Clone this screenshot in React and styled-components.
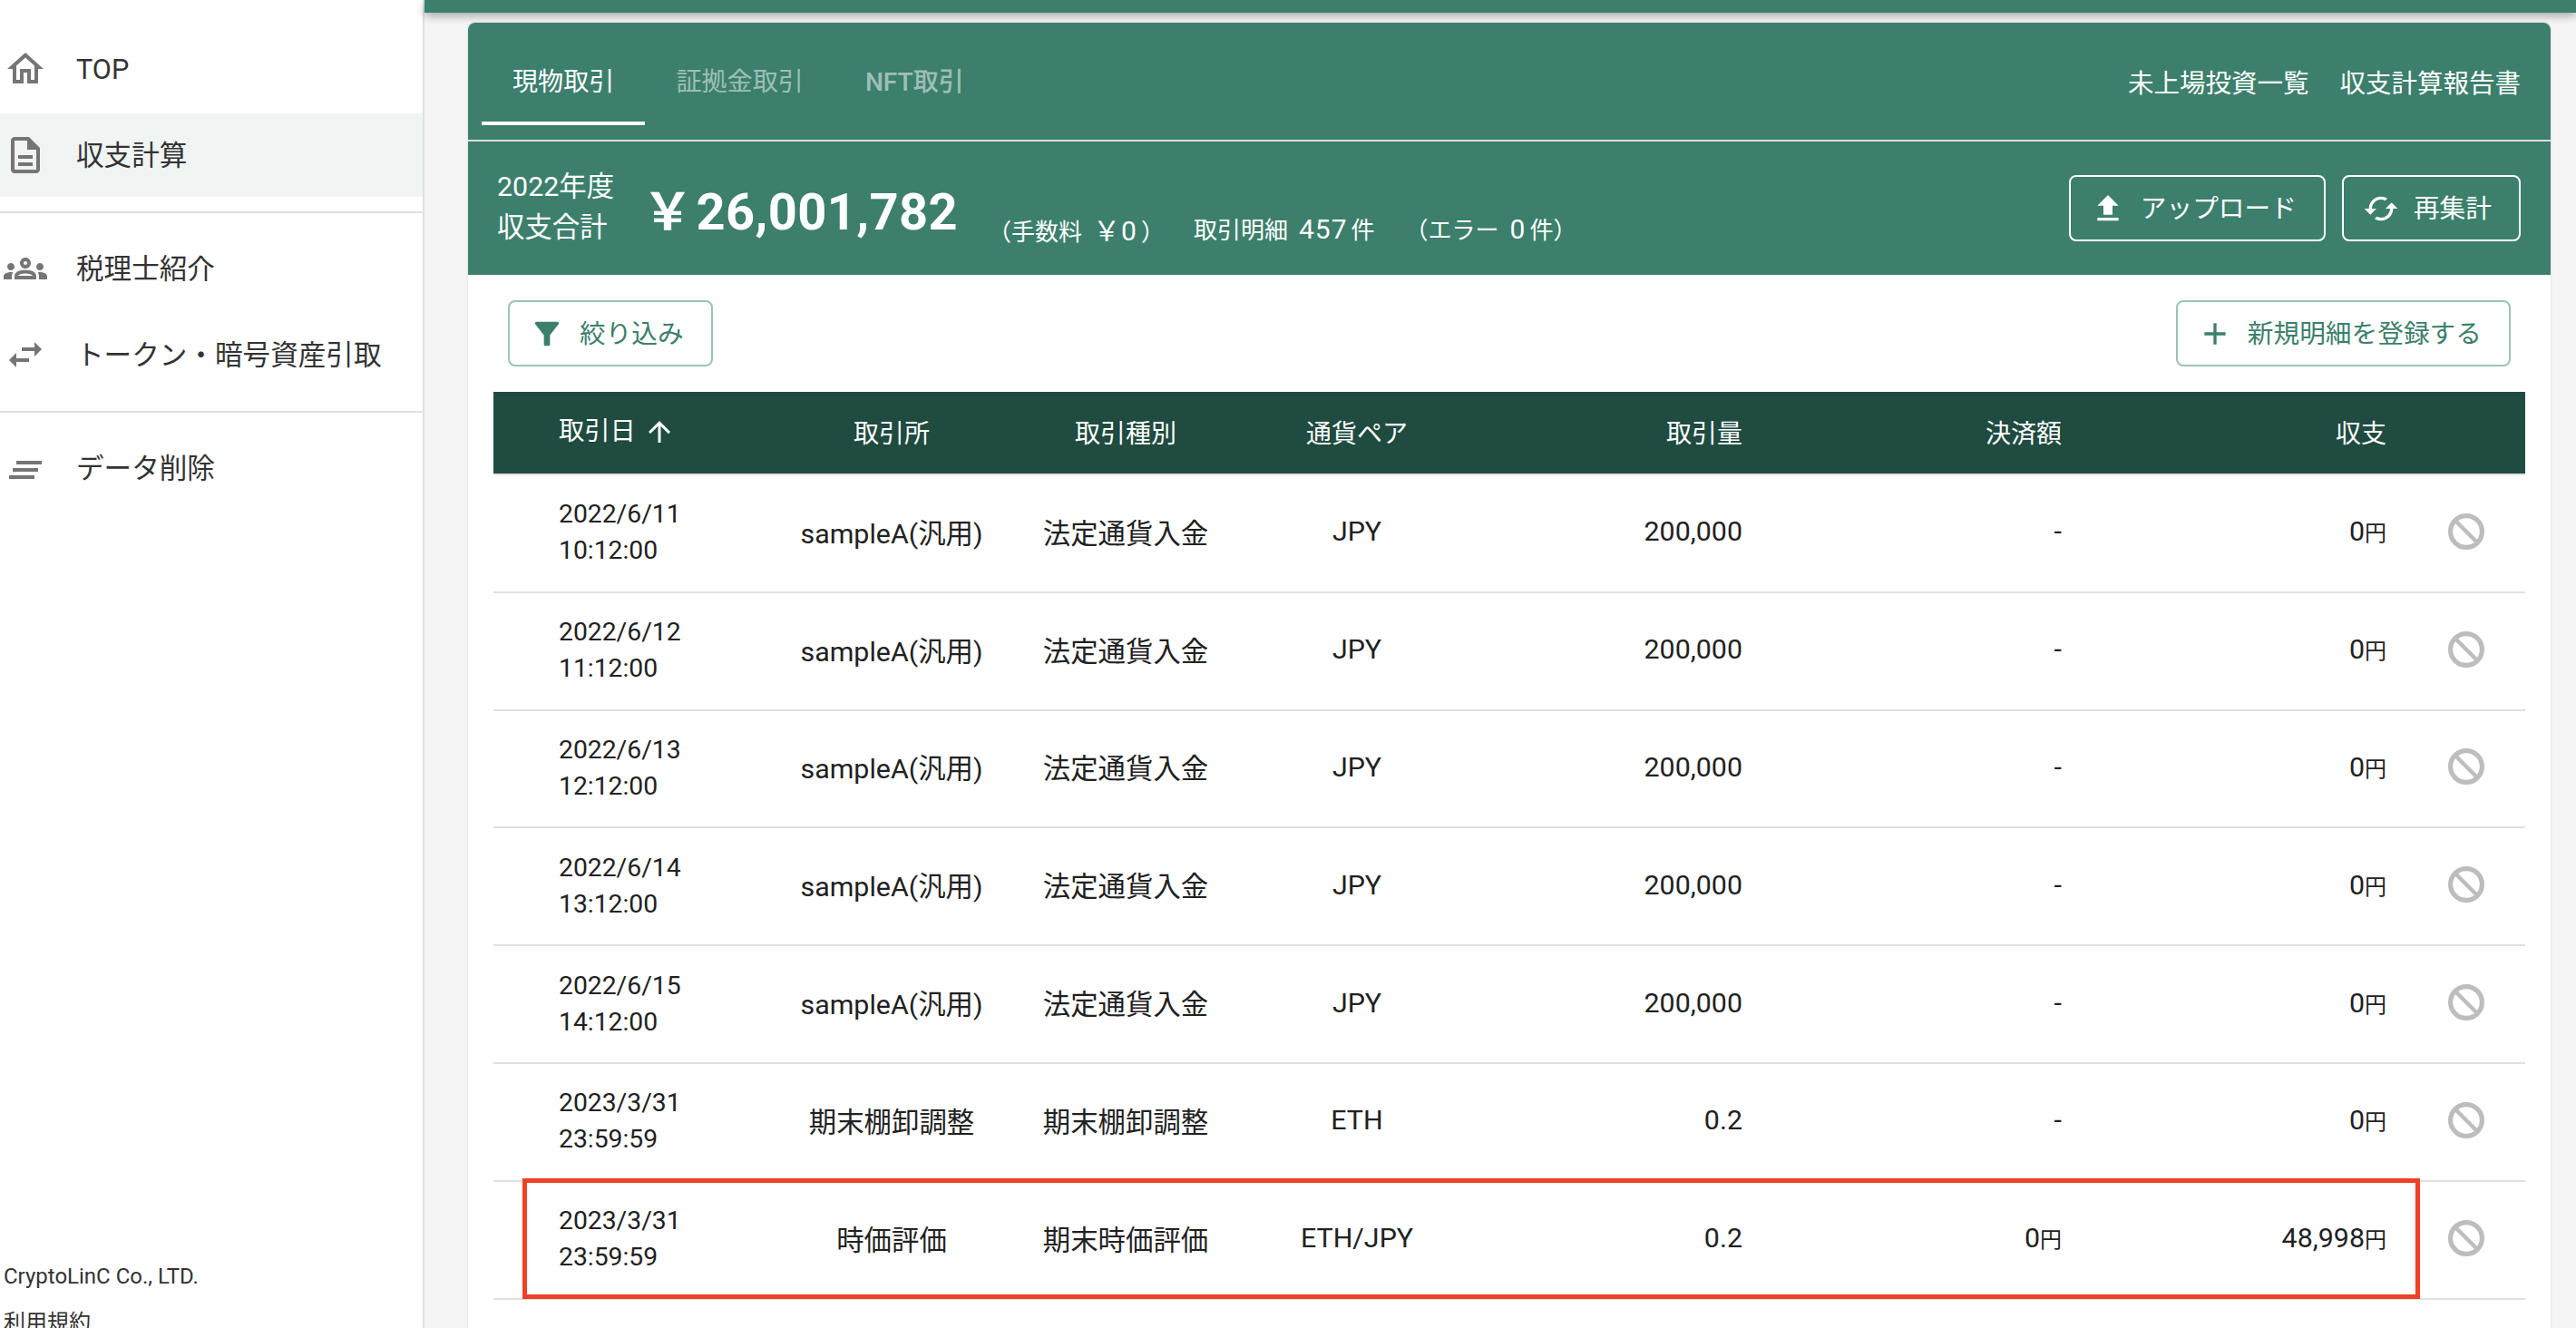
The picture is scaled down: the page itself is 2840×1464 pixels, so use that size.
import styled, { createGlobalStyle } from "styled-components";

const green = "#3c7f6c";
const darkGreen = "#1f4b40";

const Global = createGlobalStyle`
  html, body {
    margin: 0;
    height: 100%;
    overflow: hidden;
    background: #f5f5f5;
  }
  * { box-sizing: border-box; }
  body {
    font-family: Roboto, "Noto Sans CJK JP", sans-serif;
    color: #212121;
  }
`;

const Shell = styled.div`
  display: flex;
  height: 1484px;
`;

const Sidebar = styled.aside`
  flex: 0 0 468px;
  display: flex;
  flex-direction: column;
  padding-top: 30px;
  background: #fff;
  border-right: 2px solid #e0e0e0;
`;

const NavGroup = styled.div`
  display: flex;
  flex-direction: column;
  gap: 3px;
`;

const NavItem = styled.div`
  display: flex;
  align-items: center;
  gap: 32px;
  height: 92px;
  padding-left: 4px;
  font-size: 30.6px;
  color: #333;
  background: ${(p) => (p.$active ? "#f0f4f3" : "transparent")};
  svg { flex: none; fill: #757575; }
`;

const NavLabel = styled.span`
  margin-bottom: ${(p) => (p.$latin ? 0 : 5)}px;
`;

const NavDivider = styled.div`
  height: 2px;
  margin: 16px 0 15px;
  background: #e0e0e0;
`;

const SideFooter = styled.div`
  margin-top: auto;
  padding-left: 4px;
  font-size: 24px;
  line-height: 51px;
  color: #333;
`;

const Main = styled.main`
  flex: 1;
  display: flex;
  flex-direction: column;
  min-width: 0;
`;

const TopBar = styled.div`
  flex: none;
  height: 14px;
  background: ${green};
  box-shadow: 0 4px 10px rgba(0, 0, 0, 0.3);
`;

const Card = styled.section`
  flex: 1;
  margin: 11px 28px 0 48px;
  background: #fff;
  border-radius: 8px 8px 0 0;
  box-shadow: 0 0 3px rgba(0, 0, 0, 0.12);
`;

const TabBar = styled.div`
  display: flex;
  align-items: stretch;
  justify-content: space-between;
  height: 131px;
  padding: 15px 33px 0 15px;
  background: ${green};
  border-radius: 8px 8px 0 0;
  border-bottom: 2px solid #dcdcdc;
`;

const Tabs = styled.div`
  display: flex;
  height: 98px;
`;

const Tab = styled.div`
  display: flex;
  align-items: center;
  padding: 0 34px;
  font-size: 28.1px;
  color: ${(p) => (p.$active ? "#fff" : "rgba(255, 255, 255, 0.5)")};
  font-weight: ${(p) => (p.$bold ? 500 : 400)};
  border-bottom: 4px solid ${(p) => (p.$active ? "#fff" : "transparent")};
`;

const TabLinks = styled.div`
  display: flex;
  align-items: center;
  gap: 34px;
  height: 98px;
  font-size: 28.5px;
  color: #fff;
`;

const Summary = styled.div`
  display: flex;
  align-items: center;
  height: 147px;
  padding: 0 33px 0 32px;
  background: ${green};
  color: #fff;
`;

const YearLabel = styled.div`
  width: 170px;
  margin-bottom: 3px;
  font-size: 30.4px;
  line-height: 45px;
`;

const Total = styled.div`
  width: 371px;
  margin-bottom: 3px;
  font-size: 56px;
  font-weight: 700;
  letter-spacing: 0.4px;
  white-space: nowrap;
`;

const Currency = styled.span`
  display: inline-block;
  margin: 0 3px 0 -10px;
`;

const Stats = styled.div`
  display: flex;
  align-items: center;
  margin-top: 44px;
  font-size: 26px;
  white-space: nowrap;
`;

const Stat = styled.span`
  margin-right: ${(p) => p.$gap}px;
`;

const StatNumber = styled.span`
  margin: 0 4px 0 12px;
  font-size: 30px;
  letter-spacing: 1px;
`;

const SummaryActions = styled.div`
  display: flex;
  gap: 18px;
  margin-left: auto;
`;

const OutlineButton = styled.div`
  display: flex;
  align-items: center;
  gap: 16px;
  height: 73px;
  padding: 0 30px 0 21px;
  font-size: 28.7px;
  border-radius: 8px;
  border: 2px solid ${(p) => (p.$light ? "#fff" : "#9dc2b7")};
  color: ${(p) => (p.$light ? "#fff" : green)};
  background: ${(p) => (p.$light ? "transparent" : "#fff")};
  svg { flex: none; fill: currentColor; }
`;

const ButtonLabel = styled.span`
  margin-bottom: 5px;
`;

const Toolbar = styled.div`
  display: flex;
  justify-content: space-between;
  padding: 28px 44px 28px 44px;
`;

const Table = styled.div`
  margin: 0 28px;
`;

const columns = "296px 286px 230px 280px 285px 352px 358px 153px";

const HeadRow = styled.div`
  display: grid;
  grid-template-columns: ${columns};
  align-items: center;
  height: 92px;
  padding-bottom: 2px;
  font-size: 28px;
  color: #fff;
  background: ${darkGreen};
  border-bottom: 2px solid #e0e0e0;
`;

const Row = styled.div`
  position: relative;
  display: grid;
  grid-template-columns: ${columns};
  align-items: center;
  height: 129.8px;
  padding-bottom: 4px;
  font-size: 30.4px;
  border-bottom: 2px solid #e0e0e0;
`;

const Cell = styled.div`
  text-align: ${(p) => p.$align || "center"};
  white-space: nowrap;
`;

const DateCell = styled.div`
  display: flex;
  align-items: center;
  padding-left: 72px;
  padding-top: ${(p) => (p.$body ? 3 : 0)}px;
  font-size: 28.3px;
  line-height: 40px;
  svg { fill: #fff; margin-left: 8px; }
`;

const Yen = styled.span`
  font-size: 24px;
`;

const ActionCell = styled.div`
  display: flex;
  padding-left: 64px;
  svg { fill: none; stroke: #bdbdbd; }
`;

const Highlight = styled.div`
  position: absolute;
  top: -4px;
  bottom: -1px;
  left: 32px;
  right: 116px;
  border: 5px solid #ee4125;
  pointer-events: none;
`;

const Icon = ({ d, size = 40 }) => (
  <svg width={size} height={size} viewBox="0 0 24 24" aria-hidden="true">
    <path d={d} />
  </svg>
);

const BanIcon = () => (
  <svg width={48} height={48} viewBox="0 0 24 24" aria-hidden="true">
    <circle cx="12" cy="12" r="8.7" strokeWidth="2.6" />
    <line x1="6" y1="6" x2="18" y2="18" strokeWidth="2.2" />
  </svg>
);

const paths = {
  home: "m12 5.69 5 4.5V18h-2v-6H9v6H7v-7.81l5-4.5M12 3 2 12h3v8h6v-6h2v6h6v-8h3L12 3z",
  doc: "M8 16h8v2H8zm0-4h8v2H8zm6-10H6c-1.1 0-2 .9-2 2v16c0 1.1.89 2 1.99 2H18c1.1 0 2-.9 2-2V8l-6-6zm4 18H6V4h7v5h5v11z",
  groups:
    "M4 13c1.1 0 2-.9 2-2s-.9-2-2-2-2 .9-2 2 .9 2 2 2zm1.13 1.1c-.37-.06-.74-.1-1.13-.1-.99 0-1.93.21-2.78.58C.48 14.9 0 15.62 0 16.43V18h4.5v-1.61c0-.83.23-1.61.63-2.29zM20 13c1.1 0 2-.9 2-2s-.9-2-2-2-2 .9-2 2 .9 2 2 2zm4 3.43c0-.81-.48-1.53-1.22-1.85-.85-.37-1.79-.58-2.78-.58-.39 0-.76.04-1.13.1.4.68.63 1.46.63 2.29V18H24v-1.57zm-7.76-2.78c-1.17-.52-2.61-.9-4.24-.9-1.63 0-3.07.39-4.24.9C6.68 14.13 6 15.21 6 16.39V18h12v-1.61c0-1.18-.68-2.26-1.76-2.74zM8.07 16c.09-.23.13-.39.91-.69.97-.38 1.99-.56 3.02-.56s2.05.18 3.02.56c.77.3.81.46.91.69H8.07zM12 8c.55 0 1 .45 1 1s-.45 1-1 1-1-.45-1-1 .45-1 1-1m0-2c-1.66 0-3 1.34-3 3s1.34 3 3 3 3-1.34 3-3-1.34-3-3-3z",
  swap: "M6.99 11 3 15l3.99 4v-3H14v-2H6.99v-3zM21 9l-4-4v3h-7v2h7v3l4-4z",
  wipe: "M7 8h14v2H7zM5 12h14v2H5zM3 16h14v2H3z",
  upload: "M9 16h6v-6h4l-7-7-7 7h4zm-4 2h14v2H5z",
  cached:
    "m19 8-4 4h3c0 3.31-2.69 6-6 6-1.01 0-1.97-.25-2.8-.7l-1.46 1.46C8.97 19.54 10.43 20 12 20c4.42 0 8-3.58 8-8h3l-4-4zM6 12c0-3.31 2.69-6 6-6 1.01 0 1.97.25 2.8.7l1.46-1.46C15.03 4.46 13.57 4 12 4c-4.42 0-8 3.58-8 8H1l4 4 4-4H6z",
  filter:
    "M4.25 5.61C6.27 8.2 10 13 10 13v6c0 .55.45 1 1 1h2c.55 0 1-.45 1-1v-6s3.72-4.8 5.74-7.39c.51-.66.04-1.61-.79-1.61H5.04c-.83 0-1.3.95-.79 1.61z",
  add: "M19 13h-6v6h-2v-6H5v-2h6V5h2v6h6v2z",
  arrowUp: "M4 12l1.41 1.41L11 7.83V20h2V7.83l5.58 5.59L20 12l-8-8-8 8z",
};

const deposit = { exchange: "sampleA(汎用)", kind: "法定通貨入金", pair: "JPY", amount: "200,000", settled: "-", income: "0" };

const rows = [
  { ...deposit, day: "2022/6/11", time: "10:12:00" },
  { ...deposit, day: "2022/6/12", time: "11:12:00" },
  { ...deposit, day: "2022/6/13", time: "12:12:00" },
  { ...deposit, day: "2022/6/14", time: "13:12:00" },
  { ...deposit, day: "2022/6/15", time: "14:12:00" },
  { day: "2023/3/31", time: "23:59:59", exchange: "期末棚卸調整", kind: "期末棚卸調整", pair: "ETH", amount: "0.2", settled: "-", income: "0" },
  { day: "2023/3/31", time: "23:59:59", exchange: "時価評価", kind: "期末時価評価", pair: "ETH/JPY", amount: "0.2", settled: "0", income: "48,998", marked: true },
];

function Money({ value }) {
  if (value === "-") return value;
  return (
    <>
      {value}
      <Yen>円</Yen>
    </>
  );
}

export default function App() {
  return (
    <Shell>
      <Global />
      <Sidebar>
        <NavGroup>
          <NavItem><Icon d={paths.home} size={48} /><NavLabel $latin>TOP</NavLabel></NavItem>
          <NavItem $active><Icon d={paths.doc} size={48} /><NavLabel>収支計算</NavLabel></NavItem>
        </NavGroup>
        <NavDivider />
        <NavGroup>
          <NavItem><Icon d={paths.groups} size={48} /><NavLabel>税理士紹介</NavLabel></NavItem>
          <NavItem><Icon d={paths.swap} size={48} /><NavLabel>トークン・暗号資産引取</NavLabel></NavItem>
        </NavGroup>
        <NavDivider />
        <NavGroup>
          <NavItem><Icon d={paths.wipe} size={48} /><NavLabel>データ削除</NavLabel></NavItem>
        </NavGroup>
        <SideFooter>
          <div>CryptoLinC Co., LTD.</div>
          <div>利用規約</div>
        </SideFooter>
      </Sidebar>

      <Main>
        <TopBar />
        <Card>
          <TabBar>
            <Tabs>
              <Tab $active>現物取引</Tab>
              <Tab>証拠金取引</Tab>
              <Tab $bold>NFT取引</Tab>
            </Tabs>
            <TabLinks>
              <span>未上場投資一覧</span>
              <span>収支計算報告書</span>
            </TabLinks>
          </TabBar>

          <Summary>
            <YearLabel>
              2022年度
              <br />
              収支合計
            </YearLabel>
            <Total><Currency>￥</Currency>26,001,782</Total>
            <Stats>
              <Stat $gap={32}>（手数料<StatNumber>￥0</StatNumber>）</Stat>
              <Stat $gap={33}>取引明細<StatNumber>457</StatNumber>件</Stat>
              <Stat $gap={0}>（エラー<StatNumber>0</StatNumber>件）</Stat>
            </Stats>
            <SummaryActions>
              <OutlineButton $light><Icon d={paths.upload} /><ButtonLabel>アップロード</ButtonLabel></OutlineButton>
              <OutlineButton $light><Icon d={paths.cached} /><ButtonLabel>再集計</ButtonLabel></OutlineButton>
            </SummaryActions>
          </Summary>

          <Toolbar>
            <OutlineButton><Icon d={paths.filter} /><ButtonLabel>絞り込み</ButtonLabel></OutlineButton>
            <OutlineButton><Icon d={paths.add} /><ButtonLabel>新規明細を登録する</ButtonLabel></OutlineButton>
          </Toolbar>

          <Table>
            <HeadRow>
              <DateCell>取引日<Icon d={paths.arrowUp} size={36} /></DateCell>
              <Cell>取引所</Cell>
              <Cell>取引種別</Cell>
              <Cell>通貨ペア</Cell>
              <Cell $align="right">取引量</Cell>
              <Cell $align="right">決済額</Cell>
              <Cell $align="right">収支</Cell>
              <div />
            </HeadRow>
            {rows.map((row, i) => (
              <Row key={i}>
                <DateCell $body>
                  <div>
                    {row.day}
                    <br />
                    {row.time}
                  </div>
                </DateCell>
                <Cell>{row.exchange}</Cell>
                <Cell>{row.kind}</Cell>
                <Cell>{row.pair}</Cell>
                <Cell $align="right">{row.amount}</Cell>
                <Cell $align="right"><Money value={row.settled} /></Cell>
                <Cell $align="right"><Money value={row.income} /></Cell>
                <ActionCell><BanIcon /></ActionCell>
                {row.marked && <Highlight />}
              </Row>
            ))}
          </Table>
        </Card>
      </Main>
    </Shell>
  );
}
